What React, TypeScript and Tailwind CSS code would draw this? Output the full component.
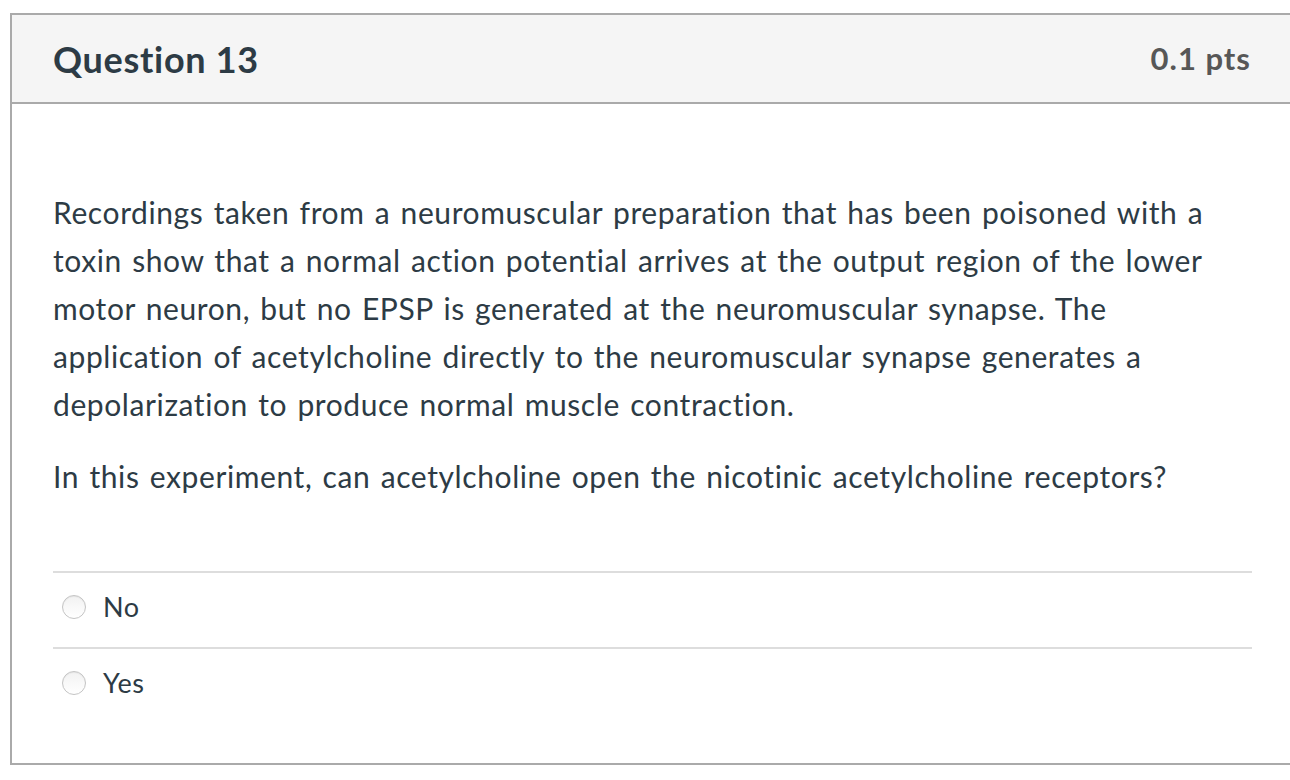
import React from "react";

function Radio() {
  return (
    <span className="inline-block w-[24px] h-[24px] rounded-full border border-[#c4c4c4] bg-gradient-to-b from-[#f2f2f2] to-[#ffffff] shadow-[inset_0_1px_1px_rgba(0,0,0,0.06)]" />
  );
}

function Answer({ label }: { label: string }) {
  return (
    <div className="border-t-2 border-[#dddddd] h-[76px] pb-[6px] flex items-center">
      <span className="ml-[9px] flex">
        <Radio />
      </span>
      <span className="ml-[17px] text-[27px] tracking-[0.6px] text-[#2d3b45]">{label}</span>
    </div>
  );
}

export default function App() {
  return (
    <div
      className="w-[1290px] h-[780px] overflow-hidden bg-white pt-[13px] pl-[10px]"
      style={{ fontFamily: "Lato, 'Open Sans', sans-serif" }}
    >
      <div className="w-[1320px] border-2 border-[#aaaaaa] bg-white">
        <div className="h-[89px] bg-[#f5f5f5] border-b-2 border-[#aaaaaa] flex items-center justify-between pl-[41px] pr-[77px]">
          <h2 className="text-[36px] font-bold tracking-[0.7px] text-[#2d3b45] leading-none">Question 13</h2>
          <span className="text-[31px] font-bold tracking-[1px] text-[#575757] leading-none">0.1 pts</span>
        </div>
        <div className="pl-[41px] w-[1240px] pt-[84px] pb-[40px]">
          <div className="text-[30px] leading-[48px] tracking-[0.6px] [word-spacing:2px] text-[#2d3b45] whitespace-nowrap">
            <p>
              Recordings taken from a neuromuscular preparation that has been poisoned with a
              <br />
              toxin show that a normal action potential arrives at the output region of the lower
              <br />
              motor neuron, but no EPSP is generated at the neuromuscular synapse. The
              <br />
              application of acetylcholine directly to the neuromuscular synapse generates a
              <br />
              depolarization to produce normal muscle contraction.
            </p>
            <p className="mt-[24px]">
              In this experiment, can acetylcholine open the nicotinic acetylcholine receptors?
            </p>
          </div>
          <div className="mt-[71px] w-[1199px]">
            <Answer label="No" />
            <Answer label="Yes" />
          </div>
        </div>
      </div>
    </div>
  );
}
